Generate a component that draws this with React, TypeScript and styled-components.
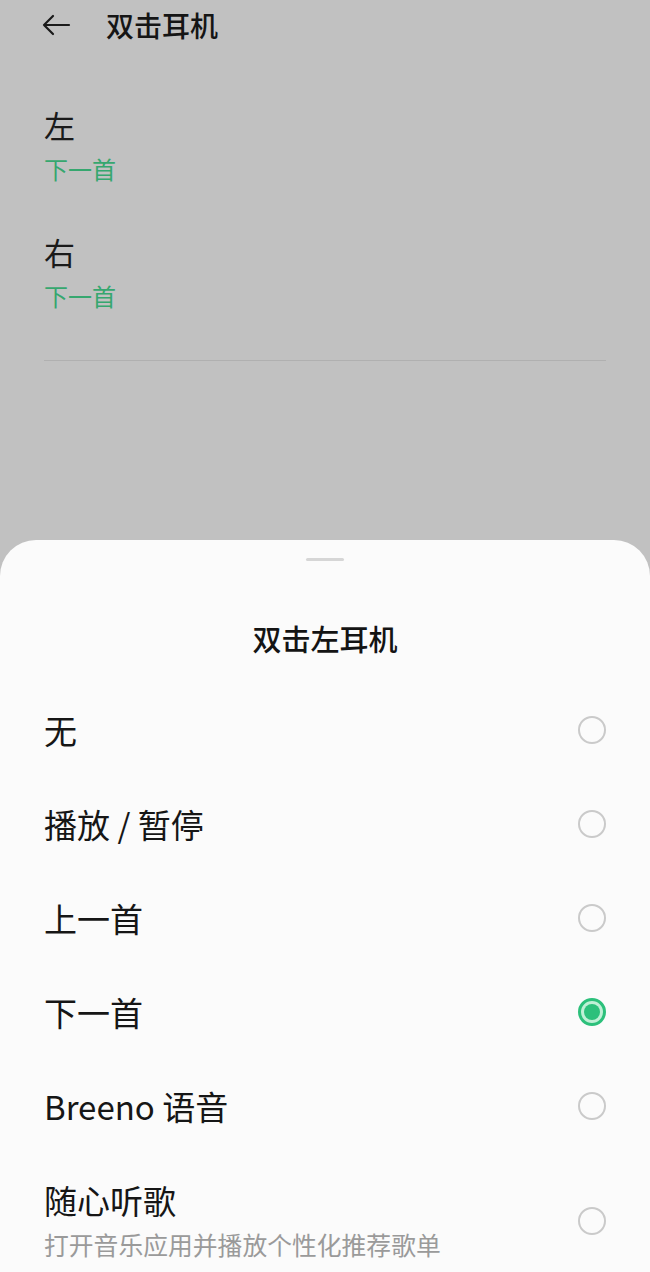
import styled, { createGlobalStyle } from 'styled-components';

const GlobalStyle = createGlobalStyle`
  html, body {
    margin: 0;
    padding: 0;
    background: #c1c1c1;
  }
  body {
    font-family: "Noto Sans CJK SC", "Noto Sans", sans-serif;
    color: #161616;
  }
`;

const Page = styled.div`
  display: flex;
  flex-direction: column;
  width: 650px;
  height: 1272px;
  overflow: hidden;
  background: #c1c1c1;
`;

const Top = styled.div`
  flex: none;
  height: 540px;
  display: flex;
  flex-direction: column;
`;

const Header = styled.div`
  display: flex;
  align-items: center;
  height: 50px;
  padding-left: 40px;
  gap: 34px;
`;

const Title = styled.div`
  font-size: 28px;
  line-height: 40px;
  font-weight: 500;
  color: #151515;
`;

const SideList = styled.div`
  display: flex;
  flex-direction: column;
  gap: 46px;
  padding: 55px 44px 0;
`;

const Side = styled.div`
  display: flex;
  flex-direction: column;
  gap: 7px;
`;

const SideLabel = styled.div`
  font-size: 31px;
  line-height: 40px;
  color: #1a1a1a;
`;

const SideValue = styled.div`
  font-size: 24px;
  line-height: 34px;
  color: #36a76f;
`;

const Divider = styled.div`
  margin: 47px 44px 0;
  height: 1px;
  background: #b0b0b0;
`;

const Sheet = styled.div`
  flex: 1;
  display: flex;
  flex-direction: column;
  background: #fbfbfb;
  border-radius: 36px 36px 0 0;
`;

const Handle = styled.div`
  align-self: center;
  width: 38px;
  height: 3px;
  border-radius: 2px;
  background: #d6d6d6;
  margin-top: 18px;
`;

const SheetTitle = styled.div`
  text-align: center;
  font-size: 29px;
  line-height: 40px;
  font-weight: 500;
  margin-top: 57px;
  margin-bottom: 26px;
  color: #141414;
`;

const Option = styled.div`
  display: flex;
  align-items: center;
  justify-content: space-between;
  padding: 26px 44px 28px;
`;

const OptionText = styled.div`
  display: flex;
  flex-direction: column;
  gap: 7px;
`;

const OptionLabel = styled.div`
  font-size: 33px;
  line-height: 40px;
  color: #161616;
`;

const OptionHint = styled.div`
  font-size: 24.8px;
  line-height: 34px;
  color: #9a9a9a;
`;

const Radio = styled.div<{ $checked?: boolean }>`
  flex: none;
  width: 28px;
  height: 28px;
  box-sizing: border-box;
  border-radius: 50%;
  border: ${(p) => (p.$checked ? '3px solid #2cc07b' : '2px solid #cacaca')};
  background: ${(p) => (p.$checked ? '#bff0d6' : 'transparent')};
  display: flex;
  align-items: center;
  justify-content: center;

  &::after {
    content: '';
    display: ${(p) => (p.$checked ? 'block' : 'none')};
    width: 16px;
    height: 16px;
    border-radius: 50%;
    background: #2cc07b;
  }
`;

const BackArrow = () => (
  <svg width="32" height="32" viewBox="0 0 32 32" fill="none">
    <path
      d="M29 16H4M13 7l-9 9 9 9"
      stroke="#1a1a1a"
      strokeWidth="2.2"
      strokeLinecap="round"
      strokeLinejoin="round"
    />
  </svg>
);

const options = [
  { label: '无' },
  { label: '播放 / 暂停' },
  { label: '上一首' },
  { label: '下一首', checked: true },
  { label: 'Breeno 语音' },
  { label: '随心听歌', hint: '打开音乐应用并播放个性化推荐歌单' },
];

const App = () => {
  return (
    <Page>
      <GlobalStyle />
      <Top>
        <Header>
          <BackArrow />
          <Title>双击耳机</Title>
        </Header>
        <SideList>
          <Side>
            <SideLabel>左</SideLabel>
            <SideValue>下一首</SideValue>
          </Side>
          <Side>
            <SideLabel>右</SideLabel>
            <SideValue>下一首</SideValue>
          </Side>
        </SideList>
        <Divider />
      </Top>
      <Sheet>
        <Handle />
        <SheetTitle>双击左耳机</SheetTitle>
        {options.map((o) => (
          <Option key={o.label}>
            <OptionText>
              <OptionLabel>{o.label}</OptionLabel>
              {o.hint && <OptionHint>{o.hint}</OptionHint>}
            </OptionText>
            <Radio $checked={o.checked} />
          </Option>
        ))}
      </Sheet>
    </Page>
  );
};

export default App;
